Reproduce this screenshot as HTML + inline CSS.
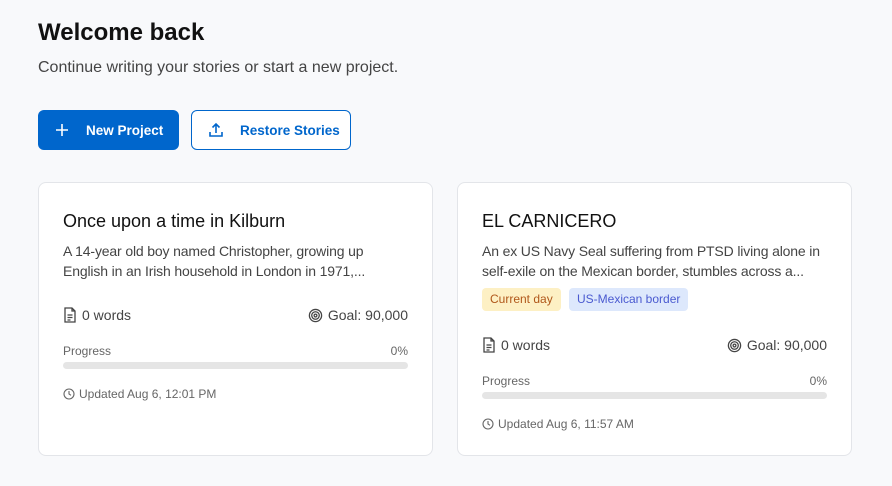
<!DOCTYPE html><html><head><style>
*{box-sizing:border-box;margin:0;padding:0}
body{width:892px;height:486px;background:#f8f9fb;font-family:"Liberation Sans",sans-serif;position:relative;overflow:hidden;color:#111}
.a{position:absolute;white-space:nowrap}
h1{position:absolute;left:38px;top:19px;font-size:24px;font-weight:bold;color:#111}
.sub{left:38px;top:59px;font-size:16px;color:#444}
.btn{position:absolute;top:110px;height:40px;border-radius:6px;font-size:13.5px;font-weight:bold;display:flex;align-items:center}
.card{position:absolute;top:182px;width:395px;height:274px;background:#fff;border:1px solid #e3e5e9;border-radius:8px}
.t{left:24px;top:28px;font-size:18px;color:#111}
.d{left:24px;top:58px;font-size:14px;line-height:20px;color:#444;letter-spacing:-0.15px}
.m{font-size:14px;color:#444;display:flex;align-items:center;gap:5px}
.s{font-size:12px;color:#666}
.bar{height:7px;width:345px;background:#e5e5e5;border-radius:4px;left:24px}
.tag{font-size:12px;padding:0 8px;height:23px;line-height:23px;border-radius:4px;top:105px}
</style></head><body>
<h1>Welcome back</h1>
<div class="a sub">Continue writing your stories or start a new project.</div>
<div class="btn" style="left:38px;width:141px;background:#0066cc;color:#fff">
<svg style="margin-left:17px" width="14" height="14" viewBox="0 0 14 14"><path d="M7 1v12M1 7h12" stroke="#fff" stroke-width="1.6"/></svg>
<span style="margin-left:17px">New Project</span></div>
<div class="btn" style="left:191px;width:160px;background:#fff;border:1px solid #0066cc;color:#0066cc">
<svg style="margin-left:16px" width="16" height="16" viewBox="0 0 16 16" fill="none" stroke="#0066cc" stroke-width="1.6"><path d="M8 11V2M4.5 5.5L8 2l3.5 3.5M2 10v4h12v-4"/></svg>
<span style="margin-left:16px">Restore Stories</span></div>

<div class="card" style="left:38px">
<div class="a t">Once upon a time in Kilburn</div>
<div class="a d">A 14-year old boy named Christopher, growing up<br>English in an Irish household in London in 1971,...</div>
<div class="a m" style="left:24px;top:124px"><svg width="14" height="16" viewBox="0 0 14 16" fill="none" stroke="#444" stroke-width="1.3"><path d="M2 1h7l3 3v11H2zM9 1v3h3M4.5 8h5M4.5 10.5h5M4.5 13h3"/></svg>0 words</div>
<div class="a m" style="right:24px;top:124px"><svg width="15" height="15" viewBox="0 0 16 16" fill="none" stroke="#444" stroke-width="1.4"><circle cx="8" cy="8" r="6.5"/><circle cx="8" cy="8" r="4"/><circle cx="8" cy="8" r="1.5"/></svg>Goal: 90,000</div>
<div class="a s" style="left:24px;top:161px">Progress</div>
<div class="a s" style="right:24px;top:161px">0%</div>
<div class="a bar" style="top:179px"></div>
<div class="a s" style="left:24px;top:204px;display:flex;align-items:center;gap:4px"><svg width="12" height="12" viewBox="0 0 12 12" fill="none" stroke="#666" stroke-width="1.1"><circle cx="6" cy="6" r="5"/><path d="M6 3v3l2 1.3"/></svg>Updated Aug 6, 12:01 PM</div>
</div>

<div class="card" style="left:457px">
<div class="a t">EL CARNICERO</div>
<div class="a d">An ex US Navy Seal suffering from PTSD living alone in<br>self-exile on the Mexican border, stumbles across a...</div>
<div class="a tag" style="left:24px;background:#fdf0c4;color:#b0571a">Current day</div>
<div class="a tag" style="left:111px;background:#dde8fc;color:#4a5ad0">US-Mexican border</div>
<div class="a m" style="left:24px;top:154px"><svg width="14" height="16" viewBox="0 0 14 16" fill="none" stroke="#444" stroke-width="1.3"><path d="M2 1h7l3 3v11H2zM9 1v3h3M4.5 8h5M4.5 10.5h5M4.5 13h3"/></svg>0 words</div>
<div class="a m" style="right:24px;top:154px"><svg width="15" height="15" viewBox="0 0 16 16" fill="none" stroke="#444" stroke-width="1.4"><circle cx="8" cy="8" r="6.5"/><circle cx="8" cy="8" r="4"/><circle cx="8" cy="8" r="1.5"/></svg>Goal: 90,000</div>
<div class="a s" style="left:24px;top:191px">Progress</div>
<div class="a s" style="right:24px;top:191px">0%</div>
<div class="a bar" style="top:209px"></div>
<div class="a s" style="left:24px;top:234px;display:flex;align-items:center;gap:4px"><svg width="12" height="12" viewBox="0 0 12 12" fill="none" stroke="#666" stroke-width="1.1"><circle cx="6" cy="6" r="5"/><path d="M6 3v3l2 1.3"/></svg>Updated Aug 6, 11:57 AM</div>
</div>
</body></html>
